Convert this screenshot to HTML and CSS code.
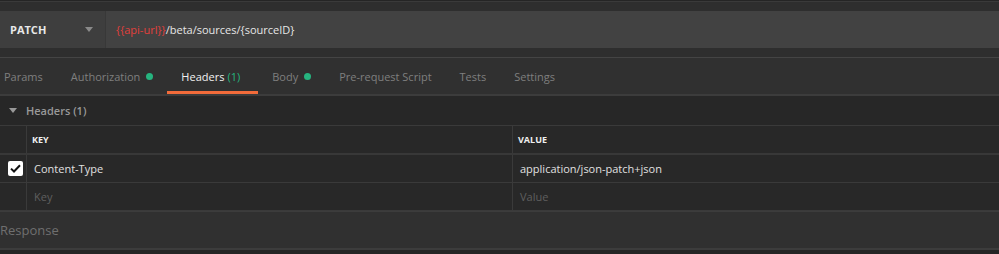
FILE: index.html
```html
<!DOCTYPE html>
<html lang="en">
<head>
    <meta charset="UTF-8" />
    <title>PATCH sources</title>
    <link rel="stylesheet" href="styles.css">
</head>
<body>
    <div id="requestBar">
        <div id="urlRow">
            <div class="method">
                <span>PATCH</span>
                <span class="caret"></span>
            </div>
            <div class="url"><span class="var">{{api-url}}</span>/beta/sources/{sourceID}</div>
        </div>
    </div>

    <div id="tabs">
        <div class="tab">Params</div>
        <div class="tab">Authorization <span class="dot"></span></div>
        <div class="tab active">Headers <span class="count">(1)</span></div>
        <div class="tab">Body <span class="dot"></span></div>
        <div class="tab">Pre-request Script</div>
        <div class="tab">Tests</div>
        <div class="tab">Settings</div>
    </div>

    <div id="sectionTitle">
        <span class="arrow"></span>
        <span>Headers (1)</span>
    </div>

    <div id="headersTable">
        <div class="row head">
            <div class="cell check"></div>
            <div class="cell key">KEY</div>
            <div class="cell value">VALUE</div>
        </div>
        <div class="row">
            <div class="cell check">
                <span class="checkbox">
                    <svg width="11" height="9" viewBox="0 0 11 9"><path d="M1 4.6 L4 7.5 L10 1.3" fill="none" stroke="#111" stroke-width="2"/></svg>
                </span>
            </div>
            <div class="cell key">Content-Type</div>
            <div class="cell value">application/json-patch+json</div>
        </div>
        <div class="row">
            <div class="cell check"></div>
            <div class="cell key placeholder">Key</div>
            <div class="cell value placeholder">Value</div>
        </div>
    </div>

    <div id="response">Response</div>
</body>
</html>
```

FILE: styles.css
```css
body {
  margin: 0;
  width: 999px;
  height: 254px;
  overflow: hidden;
  background-color: #252525;
  font-family: "Open Sans", Arial, sans-serif;
  font-size: 11px;
  color: #e0e0e0;
}

#requestBar {
  background-color: #2e2e2e;
  border-top: 1px solid #3a3a3a;
  padding: 9px 0;
  margin-top: 1px;
  border-bottom: 1px solid #444;
}

#urlRow {
  display: flex;
  height: 37px;
}

.method {
  width: 106px;
  background-color: #3e3e3e;
  display: flex;
  align-items: center;
  justify-content: space-between;
  padding: 0 12px 0 10px;
  box-sizing: border-box;
  font-weight: bold;
  font-size: 11px;
  color: #e8e8e8;
  border-right: 1px solid #383838;
}

.caret {
  width: 0;
  height: 0;
  border-left: 4px solid transparent;
  border-right: 4px solid transparent;
  border-top: 5px solid #8a8a8a;
}

.url {
  flex: 1;
  background-color: #424242;
  display: flex;
  align-items: center;
  padding-left: 10px;
  color: #e6e6e6;
}

.url .var {
  color: #e0403c;
}

#tabs {
  display: flex;
  height: 36px;
  background-color: #303030;
  border-bottom: 2px solid #3c3c3c;
  padding-left: 4px;
}

.tab {
  display: flex;
  align-items: center;
  margin-right: 28px;
  color: #7f7f7f;
  box-sizing: border-box;
  border-bottom: 3px solid transparent;
  padding-top: 3px;
}

.tab .dot {
  display: inline-block;
  width: 7px;
  height: 7px;
  border-radius: 50%;
  background-color: #26b47f;
  margin-left: 6px;
}

.tab.active {
  color: #f0f0f0;
  border-bottom-color: #f26b3a;
  padding: 3px 18px 0 14px;
  margin-right: 14px;
  margin-left: -14px;
}

.tab .count {
  color: #26b47f;
  margin-left: 3px;
}

#sectionTitle {
  height: 29px;
  display: flex;
  align-items: center;
  padding-left: 9px;
  background-color: #272727;
  color: #999;
  font-weight: 600;
  border-bottom: 1px solid #3a3a3a;
}

.arrow {
  width: 0;
  height: 0;
  border-left: 4px solid transparent;
  border-right: 4px solid transparent;
  border-top: 5px solid #999;
  margin-right: 9px;
}

.row {
  display: flex;
  height: 27px;
  background-color: #282828;
  border-bottom: 1px solid #3a3a3a;
}

.row.head {
  border-bottom: 2px solid #383838;
}

.cell {
  display: flex;
  align-items: center;
  box-sizing: border-box;
}

.cell.check {
  width: 27px;
  border-right: 1px solid #3a3a3a;
  justify-content: center;
  padding-left: 4px;
}

.cell.key {
  width: 486px;
  padding-left: 7px;
  border-right: 1px solid #3a3a3a;
}

.cell.value {
  flex: 1;
  padding-left: 7px;
}

.row.head .cell.key,
.row.head .cell.value {
  font-size: 9px;
  font-weight: bold;
  color: #f0f0f0;
  padding-left: 5px;
}

.placeholder {
  color: #5f5f5f;
}

.checkbox {
  width: 15px;
  height: 15px;
  background-color: #fff;
  border-radius: 2px;
  display: flex;
  align-items: center;
  justify-content: center;
}

#response {
  height: 36px;
  display: flex;
  align-items: center;
  background-color: #303030;
  border-top: 1px solid #3c3c3c;
  border-bottom: 2px solid #3c3c3c;
  color: #6f6f6f;
  font-size: 13px;
}
```
